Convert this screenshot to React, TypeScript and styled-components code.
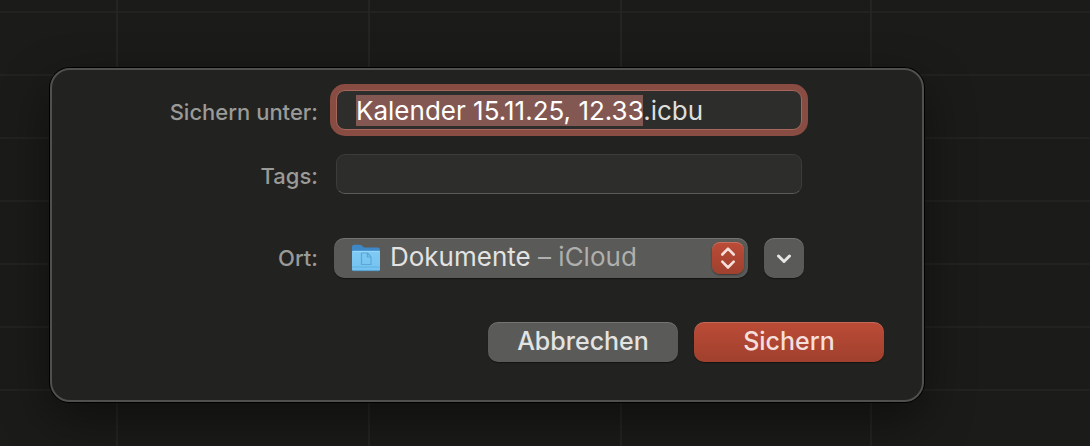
import React, { useEffect, useRef } from "react";
import styled, { createGlobalStyle } from "styled-components";

const GlobalStyle = createGlobalStyle`
  *, *::before, *::after { box-sizing: border-box; }
  body {
    margin: 0;
    background: #1b1b19;
    font-family: Inter, "Liberation Sans", sans-serif;
  }
`;

const Page = styled.main`
  display: grid;
  min-height: 100vh;
  background: #1b1b19;
`;

const Calendar = styled.div`
  grid-area: 1 / 1;
  display: grid;
  grid-template-columns: 118px 252px 252px 250px 1fr;
  background: repeating-linear-gradient(
    to bottom,
    transparent 0 11px,
    #222220 11px 13px,
    transparent 13px 63px
  );
`;

const DayColumn = styled.div`
  border-right: 2px solid #242422;

  &:last-child {
    border-right: 0;
  }
`;

const Sheet = styled.form`
  grid-area: 1 / 1;
  align-self: start;
  display: flex;
  flex-direction: column;
  margin: 68px 166px 44px 50px;
  padding: 20px 38px 38px 0;
  border: 2px solid #50504e;
  border-radius: 20px;
  background: #222220;
  box-shadow: 0 0 0 1px #000, 0 18px 50px rgba(0, 0, 0, 0.45);
`;

const Fields = styled.div`
  display: grid;
  grid-template-columns: 266px 1fr;
  column-gap: 18px;
  padding-right: 82px;
`;

const Label = styled.label<{ $popUp?: boolean }>`
  margin-top: ${(p) => (p.$popUp ? "44px" : "24px")};
  height: 40px;
  line-height: ${(p) => (p.$popUp ? "40px" : "44px")};
  font-size: 22px;
  font-weight: 500;
  text-align: right;
  white-space: nowrap;
  color: #9a9a98;

  &:first-child {
    margin-top: 0;
  }
`;

const TextField = styled.input<{ $top?: number }>`
  width: 100%;
  height: 40px;
  margin: ${(p) => p.$top ?? 0}px 0 0;
  padding: 1px 19px 0;
  border: 1px solid #3c3c3a;
  border-bottom-color: #5a5a58;
  border-radius: 9px;
  outline: 0;
  background: #2d2d2b;
  color: #dededd;
  font-family: inherit;
  font-size: 26px;
  line-height: 32px;

  &::selection {
    background: rgba(133, 88, 82, 0.996);
    color: #fff;
  }
`;

const NameField = styled(TextField)`
  border-color: #a5675c;
  box-shadow: 0 0 0 6px #884c42;
`;

const LocationRow = styled.div`
  display: flex;
  gap: 16px;
  margin: 44px -2px 0;
`;

const raised = `
  border: 0;
  border-radius: 10px;
  background: #5a5a58;
  box-shadow: inset 0 1px 0 rgba(255, 255, 255, 0.16), 0 1px 1px rgba(0, 0, 0, 0.4);
`;

const PopUp = styled.div`
  ${raised}
  position: relative;
  flex: 1;
  display: flex;
  align-items: center;
  height: 40px;
  padding: 0 4px 0 16px;
`;

const PopUpSelect = styled.select`
  position: absolute;
  inset: 0;
  width: 100%;
  height: 100%;
  opacity: 0;
  font-size: 26px;
`;

const PopUpText = styled.span`
  flex: 1;
  padding-left: 8px;
  font-size: 26px;
  line-height: 38px;
  height: 40px;
  white-space: nowrap;
  color: #e3e3e2;
`;

const Muted = styled.span`
  color: #afafad;
`;

const Stepper = styled.span`
  display: grid;
  place-items: center;
  width: 32px;
  height: 32px;
  border-radius: 8px;
  background: linear-gradient(#bb4c37, #9f402e);
  box-shadow: inset 0 1px 0 rgba(255, 255, 255, 0.2), 0 1px 2px rgba(0, 0, 0, 0.4);
`;

const ExpandButton = styled.button`
  ${raised}
  display: grid;
  place-items: center;
  width: 40px;
  height: 40px;
  padding: 0;
`;

const Actions = styled.div`
  display: flex;
  justify-content: flex-end;
  gap: 16px;
  margin-top: 44px;
`;

const ActionButton = styled.button<{ $primary?: boolean }>`
  ${raised}
  width: 190px;
  height: 40px;
  padding: 0 0 2px;
  font-family: inherit;
  font-size: 25px;
  font-weight: 500;
  line-height: 32px;
  color: ${(p) => (p.$primary ? "#f4dfdc" : "#e3e3e2")};
  ${(p) => p.$primary && "background: linear-gradient(#bb4c37, #a0402e);"}
`;

const FolderIcon = () => (
  <svg width="32" height="32" viewBox="0 -1 32 32" aria-hidden="true">
    <defs>
      <linearGradient id="folderFront" x1="0" y1="0" x2="0" y2="1">
        <stop offset="0" stopColor="#80cbf5" />
        <stop offset="1" stopColor="#74c2f1" />
      </linearGradient>
    </defs>
    <path d="M2 4Q2 1.800 4 1.800h5.700q1.200 0 2 .8l1.600 1.400q.7.600 1.800.600H28q2 0 2 2v10H2z" fill="#3e88c8" />
    <path d="M2 8.700q0-.8.8-.8h26.400q.8 0 .8.8v17.500q0 1.800-1.800 1.800H3.800q-1.800 0-1.800-1.800z" fill="url(#folderFront)" />
    <path d="M2.500 8.300h27" stroke="#9bdcff" strokeWidth="1" />
    <path d="M2 24h28" stroke="#62b0df" strokeWidth="1" />
    <path d="M2.800 27.600h26.400" stroke="#559fd0" strokeWidth="1" />
    <path d="M11.500 10h6l3.500 3.800v7.700h-9.500zM17.300 10.200v3.800h3.500" fill="none" stroke="#5ba7d6" strokeWidth="1.200" strokeLinejoin="round" />
  </svg>
);

const UpDownIcon = () => (
  <svg width="32" height="32" viewBox="0 0 32 32" fill="none" stroke="#f5dfdb" strokeWidth="2.600" strokeLinecap="round" strokeLinejoin="round" aria-hidden="true">
    <path d="M10.300 12.500 16 6.700l5.700 5.800M10.300 19.700 16 25.500l5.700-5.800" />
  </svg>
);

const ChevronIcon = () => (
  <svg width="40" height="40" viewBox="0 0 40 40" fill="none" stroke="#e6e6e5" strokeWidth="3" strokeLinecap="round" strokeLinejoin="round" aria-hidden="true">
    <path d="m14.500 18 5.500 5.500 5.500-5.500" />
  </svg>
);

const BASE_NAME = "Kalender 15.11.25, 12.33";

export default function App() {
  const nameRef = useRef<HTMLInputElement>(null);

  useEffect(() => {
    nameRef.current?.focus();
    nameRef.current?.setSelectionRange(0, BASE_NAME.length);
  }, []);

  return (
    <>
      <GlobalStyle />
      <Page>
        <Calendar aria-hidden="true">
          <DayColumn />
          <DayColumn />
          <DayColumn />
          <DayColumn />
          <DayColumn />
        </Calendar>
        <Sheet onSubmit={(e) => e.preventDefault()}>
          <Fields>
            <Label htmlFor="name">Sichern unter:</Label>
            <NameField ref={nameRef} id="name" type="text" spellCheck={false} autoComplete="off" defaultValue={`${BASE_NAME}.icbu`} />
            <Label htmlFor="tags">Tags:</Label>
            <TextField id="tags" type="text" $top={24} />
            <Label htmlFor="location" $popUp>Ort:</Label>
            <LocationRow>
              <PopUp>
                <FolderIcon />
                <PopUpText aria-hidden="true">
                  Dokumente <Muted>– iCloud</Muted>
                </PopUpText>
                <Stepper>
                  <UpDownIcon />
                </Stepper>
                <PopUpSelect id="location" defaultValue="documents">
                  <option value="documents">Dokumente – iCloud</option>
                </PopUpSelect>
              </PopUp>
              <ExpandButton type="button" aria-label="Mehr anzeigen">
                <ChevronIcon />
              </ExpandButton>
            </LocationRow>
          </Fields>
          <Actions>
            <ActionButton type="button">Abbrechen</ActionButton>
            <ActionButton type="submit" $primary>Sichern</ActionButton>
          </Actions>
        </Sheet>
      </Page>
    </>
  );
}
